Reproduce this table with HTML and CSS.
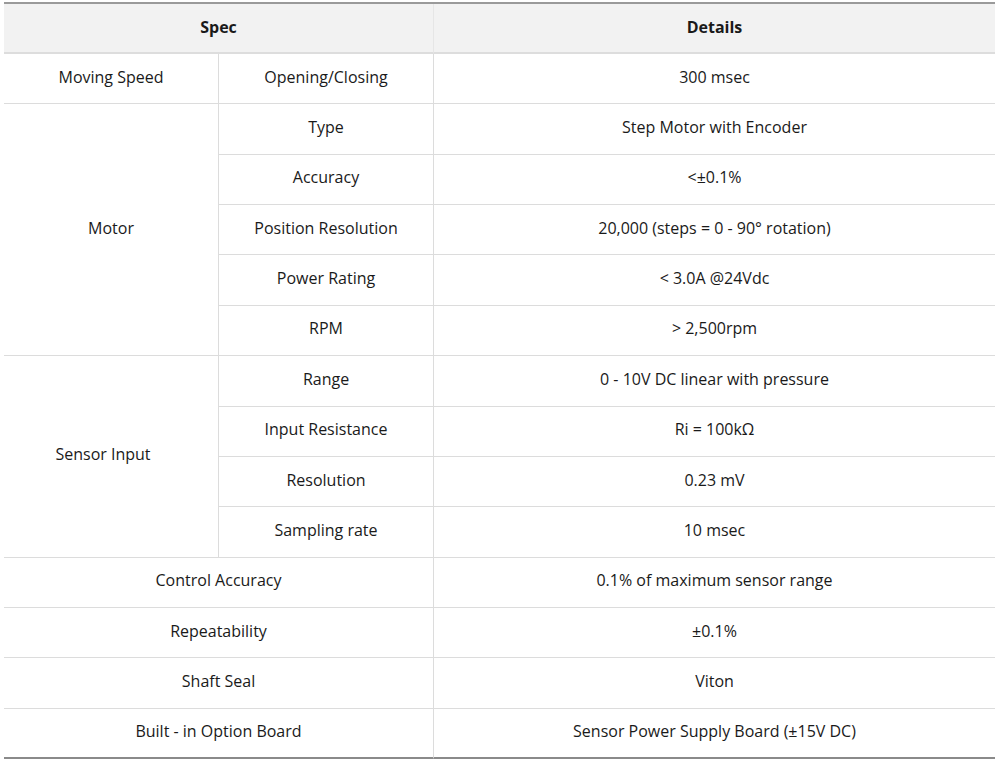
FILE: index.html
```html
<!DOCTYPE html>
<html lang="en">
<head>
<meta charset="utf-8">
<title>Spec</title>
<link rel="stylesheet" href="styles.css">
</head>
<body>
<table class="spec">
  <colgroup>
    <col class="c1"><col class="c2"><col class="c3">
  </colgroup>
  <thead>
    <tr class="head">
      <th colspan="2">Spec</th>
      <th>Details</th>
    </tr>
  </thead>
  <tbody>
    <tr>
      <td class="grp">Moving Speed</td>
      <td class="sub">Opening/Closing</td>
      <td>300 msec</td>
    </tr>
    <tr>
      <td class="grp" rowspan="5">Motor</td>
      <td class="sub">Type</td>
      <td>Step Motor with Encoder</td>
    </tr>
    <tr><td class="sub">Accuracy</td><td>&lt;±0.1%</td></tr>
    <tr><td class="sub">Position Resolution</td><td>20,000 (steps = 0 - 90° rotation)</td></tr>
    <tr><td class="sub">Power Rating</td><td>&lt; 3.0A @24Vdc</td></tr>
    <tr><td class="sub">RPM</td><td>&gt; 2,500rpm</td></tr>
    <tr>
      <td class="grp shift" rowspan="4">Sensor Input</td>
      <td class="sub">Range</td>
      <td>0 - 10V DC linear with pressure</td>
    </tr>
    <tr><td class="sub">Input Resistance</td><td>Ri = 100kΩ</td></tr>
    <tr><td class="sub">Resolution</td><td>0.23 mV</td></tr>
    <tr><td class="sub">Sampling rate</td><td>10 msec</td></tr>
    <tr><td class="sub" colspan="2">Control Accuracy</td><td>0.1% of maximum sensor range</td></tr>
    <tr><td class="sub" colspan="2">Repeatability</td><td>±0.1%</td></tr>
    <tr><td class="sub" colspan="2">Shaft Seal</td><td>Viton</td></tr>
    <tr class="last"><td class="sub" colspan="2">Built - in Option Board</td><td>Sensor Power Supply Board (±15V DC)</td></tr>
  </tbody>
</table>
</body>
</html>
```

FILE: styles.css
```css
html, body {
  margin: 0;
  background: #ffffff;
}
body {
  padding: 2px 0 0 4px;
  font-family: "Open Sans", "Noto Sans", "Liberation Sans", sans-serif;
  font-size: 16px;
  color: #1a1a1a;
}
.spec {
  border-collapse: separate;
  border-spacing: 0;
  width: 991px;
  table-layout: fixed;
  border-top: 2px solid #9a9a9a;
}
.c1 { width: 215px; }
.c2 { width: 215px; }
.c3 { width: 561px; }

.head th {
  height: 45px;
  background: #f2f2f2;
  font-weight: 700;
  font-size: 16px;
  text-align: center;
  border-bottom: 2px solid #dddddd;
  padding: 0 0 3px;
}
.head th:first-child {
  border-right: 1px solid #e6e6e6;
}
tbody tr {
  height: 50.36px;
}
td {
  padding: 0 0 4px;
  text-align: center;
  vertical-align: middle;
  border-bottom: 1px solid #dcdcdc;
}
td.grp, td.sub {
  border-right: 1px solid #dcdcdc;
}
td.shift {
  padding-right: 16px;
}
tr.last td {
  border-bottom: 2px solid #8a8a8a;
}
```
